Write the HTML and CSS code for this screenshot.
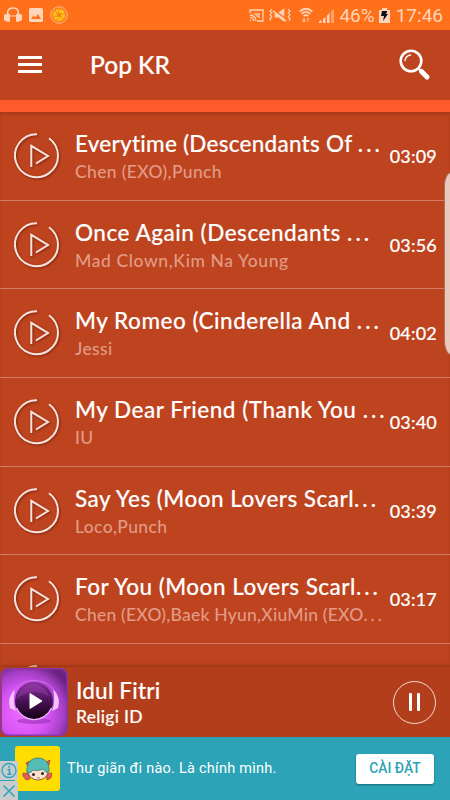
FILE: index.html
```html
<!DOCTYPE html>
<html lang="vi">
<head>
    <meta charset="UTF-8">
    <meta name="viewport" content="width=device-width, initial-scale=1.0">
    <title>Pop KR</title>
    <link rel="stylesheet" href="styles.css">
</head>
<body>

    <!-- shared icons -->
    <svg class="sprite" width="0" height="0">
        <symbol id="play" viewBox="0 0 46 46">
            <path d="M23 1.200A21.500 21.500 0 1 0 35 5.200" />
            <path d="M17.300 34V12.800L34 23 22 30.500" />
        </symbol>
    </svg>

    <div class="status-bar">
        <div class="status-left">
            <svg width="18" height="16" viewBox="0 0 18 16" fill="#ffd5ba">
                <path d="M3.500 8V6.500C3.500 3 5.500 1 9 1s5.500 2 5.500 5.500V8" fill="none" stroke="#ffd5ba" stroke-width="1.500" />
                <path d="M5 9h8" stroke="#ffd5ba" stroke-width="1" />
                <rect x="0" y="7" width="3" height="7" rx="1.500" />
                <rect x="2.500" y="6.500" width="3.500" height="8.500" rx="1.500" />
                <rect x="12" y="6.500" width="3.500" height="8.500" rx="1.500" />
                <rect x="15" y="7" width="3" height="7" rx="1.500" />
            </svg>
            <svg width="14" height="14" viewBox="0 0 14 14">
                <rect width="14" height="14" rx="1.500" fill="#ffd5ba" />
                <path d="M2 11l2.500-3.500 2 2 2.500-3.500 3 5z" fill="#ff711a" />
            </svg>
            <svg width="18" height="18" viewBox="0 0 18 18">
                <circle cx="9" cy="9" r="8.300" fill="#ff8322" stroke="#ffb47e" stroke-width="1" />
                <circle cx="9" cy="9" r="6" fill="#ffc51b" />
                <circle cx="9" cy="9" r="2.100" fill="#ff7a18" />
                <path d="M8 7L10 3M10.500 7.500l4.500.5M11 10l2 4M10 11l-4 3.500M7.200 10.500L3 10M7.200 8L5 4" stroke="#e8860d" stroke-width=".9" />
            </svg>
        </div>
        <div class="status-right">
            <svg width="15" height="13" viewBox="0 0 15 13" fill="none" stroke="#ffd5ba" stroke-width="1.300">
                <path d="M1 4V1h13v11H8" />
                <path d="M4 4h7v5H9z" fill="#ffb184" stroke="none" />
                <path d="M1 6a6 6 0 0 1 6 6M1 8.300A3.700 3.700 0 0 1 4.700 12M1 11.500h1.200" />
            </svg>
            <svg class="icon-mute" width="22" height="16" viewBox="0 0 23 16" fill="none" stroke="#ffd5ba" stroke-width="1.200">
                <path d="M3 2L1 4l2 2-2 2 2 2-2 2 1 2M20 2l2 2-2 2 2 2-2 2 2 2-1 2" />
                <path d="M6 5.500h4L16 1v14l-6-4.500H6z" fill="#ffd5ba" stroke="none" />
                <path d="M4 2l15 11" stroke="#ff711a" stroke-width="1.500" />
                <path d="M4 3.500l14 11" stroke-width="1.500" />
            </svg>
            <svg class="icon-wifi" width="14" height="16" viewBox="0 0 14 16" fill="none" stroke="#ffd5ba" stroke-width="1.700">
                <path d="M.7 4.500Q7-1 13.300 4.500M2.700 6.900Q7 3 11.300 6.900M4.700 9.200Q7 7 9.300 9.200" />
                <path d="M5 11v4M3.500 13L5 15l1.500-2" stroke="#ffd5ba" stroke-width="1" />
                <path d="M9 15v-4M7.500 13L9 11l1.500 2" stroke="#ffae78" stroke-width="1" />
            </svg>
            <svg class="icon-signal" width="15" height="15" viewBox="0 0 15 15" fill="#ffd5ba">
                <path d="M0 15v-1.500L2.500 12v3zM4 15v-4l2.500-2v6zM8 15V7.500L10.500 5v10z" />
                <path d="M12 15V3.500L15 1v14z" fill="#ffa46c" />
            </svg>
            <span class="battery-text">46%</span>
            <svg class="icon-battery" width="11" height="15" viewBox="0 0 11 15">
                <path d="M0 2h3V0h5v2h3v13H0z" fill="#ffd5ba" />
                <path d="M3 3h5v1L7 6h2l-5 7 1-5H2z" fill="#111" />
            </svg>
            <span class="clock">17:46</span>
        </div>
    </div>

    <div class="header">
        <div class="menu">
            <span></span>
            <span></span>
            <span></span>
        </div>
        <h1>Pop KR</h1>
        <svg class="search" width="32" height="32" viewBox="0 0 32 32" fill="none" stroke="#fff" stroke-linecap="round">
            <circle cx="12" cy="12" r="10.300" stroke-width="2.600" />
            <path d="M6 11.500C6.500 8.500 8.500 6.500 11.500 6" stroke-width="1.400" />
            <path d="M19.500 19.500l2 2" stroke-width="2" stroke-linecap="butt" />
            <path d="M22.500 22.500l5.500 5.500" stroke-width="5" />
        </svg>
    </div>
    <div class="strip"></div>

    <div class="songs">
        <div class="song">
            <svg class="play"><use href="#play" /></svg>
            <div class="info">
                <div class="title t1">Everytime (Descendants Of <span class="dots">...</span></div>
                <div class="artist">Chen (EXO),Punch</div>
            </div>
            <div class="time">03:09</div>
        </div>
        <div class="song">
            <svg class="play"><use href="#play" /></svg>
            <div class="info">
                <div class="title">Once Again (Descendants <span class="dots">...</span></div>
                <div class="artist a2">Mad Clown,Kim Na Young</div>
            </div>
            <div class="time">03:56</div>
        </div>
        <div class="song">
            <svg class="play"><use href="#play" /></svg>
            <div class="info">
                <div class="title">My Romeo (Cinderella And <span class="dots">...</span></div>
                <div class="artist">Jessi</div>
            </div>
            <div class="time">04:02</div>
        </div>
        <div class="song">
            <svg class="play"><use href="#play" /></svg>
            <div class="info">
                <div class="title">My Dear Friend (Thank You <span class="dots">...</span></div>
                <div class="artist">IU</div>
            </div>
            <div class="time">03:40</div>
        </div>
        <div class="song">
            <svg class="play"><use href="#play" /></svg>
            <div class="info">
                <div class="title t5">Say Yes (Moon Lovers Scarl<span class="dots">...</span></div>
                <div class="artist">Loco,Punch</div>
            </div>
            <div class="time">03:39</div>
        </div>
        <div class="song">
            <svg class="play"><use href="#play" /></svg>
            <div class="info">
                <div class="title t5">For You (Moon Lovers Scarl<span class="dots">...</span></div>
                <div class="artist a6">Chen (EXO),Baek Hyun,XiuMin (EXO<span class="dots">...</span></div>
            </div>
            <div class="time">03:17</div>
        </div>
        <div class="song">
            <svg class="play"><use href="#play" /></svg>
        </div>
        <div class="edge-panel"></div>
    </div>

    <div class="player">
        <svg class="cover" width="68" height="68" viewBox="0 0 68 68">
            <defs>
                <radialGradient id="bg" cx=".35" cy=".65" r=".75">
                    <stop offset="0" stop-color="#f36cff" />
                    <stop offset=".5" stop-color="#d653f5" />
                    <stop offset=".8" stop-color="#a53fc4" />
                    <stop offset="1" stop-color="#6c2484" />
                </radialGradient>
                <linearGradient id="ball" x1="0" y1="0" x2="0" y2="1">
                    <stop offset="0" stop-color="#8a30a0" />
                    <stop offset=".5" stop-color="#4a1259" />
                    <stop offset="1" stop-color="#10000f" />
                </linearGradient>
            </defs>
            <rect x="1.200" y=".7" width="66" height="66.600" rx="7" fill="url(#bg)" stroke="#8a35a5" stroke-width="1.400" />
            <ellipse cx="34" cy="53" rx="17" ry="3" fill="#8a25a5" opacity=".5" />
            <path d="M14 22Q7 30 10 40l6 3q-4-9-1-22zM54 22q7 8 4 18l-6 3q4-9 1-22z" fill="#f4c4ff" />
            <path d="M14 23C20 9 48 9 54 23" fill="none" stroke="#c976dd" stroke-width="1" />
            <circle cx="34" cy="33" r="19" fill="url(#ball)" />
            <path d="M16.500 40a19 19 0 0 0 35 0" fill="none" stroke="#efb4ff" stroke-width="1.400" />
            <path d="M16 32Q25 22 42 25 50 27 51 33 45 16 33 16 19 17 16 32z" fill="#a34bb8" opacity=".35" />
            <path d="M30 25.500v15L42 33z" fill="#fff" stroke="#fff" stroke-linejoin="round" />
        </svg>
        <div class="now">
            <div class="now-title">Idul Fitri</div>
            <div class="now-artist">Religi ID</div>
        </div>
        <div class="pause">
            <span></span>
            <span></span>
        </div>
    </div>

    <div class="ad">
        <div class="ad-icon">
            <svg width="32" height="26" viewBox="0 0 32 26">
                <path d="M4 7l4-2 2 4-4 2zM24 6l4-2-1 5-3 1zM1 17l6 1 1 5-4 1-3-4zM24 18l6-1-1 5-4 2z" fill="#e9585f" stroke="#8b3b32" stroke-width=".6" />
                <ellipse cx="16" cy="15.500" rx="10" ry="8.500" fill="#fde3cf" stroke="#55332b" stroke-width=".7" />
                <path d="M5 17C4 7 9 2 16 2c7 0 12 5 11 14-3 1-5-1-6-3-4 2-7 2-10 1-1 2-3 3-6 3z" fill="#55bcb6" stroke="#35736f" stroke-width=".7" />
                <circle cx="11.500" cy="18.500" r="1.500" fill="#332522" />
                <circle cx="20.500" cy="17.500" r="1.500" fill="#332522" />
                <path d="M15 21.500q1.500.8 3 0" fill="none" stroke="#b35050" stroke-width=".8" />
            </svg>
        </div>
        <div class="ad-text">Thư giãn đi nào. Là chính mình.</div>
        <div class="ad-button">CÀI ĐẶT</div>
        <div class="ad-controls">
            <svg width="18" height="19" viewBox="0 0 18 19" fill="none" stroke="#2ba4b7" stroke-width="1.300">
                <circle cx="9" cy="9.500" r="7" />
                <path d="M7.500 8.500H9.500V13M7.500 13.200h4M9 4.800v2" stroke-width="1.500" />
            </svg>
            <svg width="18" height="19" viewBox="0 0 18 19" fill="none" stroke="#2ba4b7" stroke-width="1.500">
                <path d="M3.500 4.500l11 11M14.500 4.500l-11 11" />
            </svg>
        </div>
    </div>

</body>
</html>
```
FILE: styles.css
```css
* {
    box-sizing: border-box;
}
body {
    font-family: Lato, sans-serif;
    font-weight: 500;
    margin: 0;
    height: 800px;
    display: flex;
    flex-direction: column;
    overflow: hidden;
    background: #be431f;
    color: #fff;
}
svg {
    display: block;
    flex: none;
}
.sprite {
    position: absolute;
}
.status-bar {
    height: 30px;
    flex: none;
    display: flex;
    justify-content: space-between;
    align-items: center;
    padding: 0 7px 0 4px;
    background: #ff701a;
    color: #ffd5ba;
    font-family: Roboto, sans-serif;
    font-weight: 400;
    font-size: 19px;
}
.status-left, .status-right {
    display: flex;
    align-items: center;
}
.status-left {
    gap: 7px;
}
.icon-mute {
    margin-left: 5px;
}
.icon-wifi {
    margin-left: 8px;
}
.icon-signal {
    margin: 1px 0 0 6px;
}
.battery-text {
    margin-left: 5px;
}
.icon-battery {
    margin: 0 6px 0 4px;
}
/* header */
.header {
    height: 70px;
    flex: none;
    display: flex;
    align-items: center;
    padding: 0 19px 0 18px;
}
.menu {
    width: 24px;
    display: flex;
    flex-direction: column;
    gap: 4.5px;
    margin-top: -1px;
}
.menu span {
    height: 2.5px;
    background: #fff;
}
h1 {
    flex: 1;
    margin: 0 0 0 48px;
    font-size: 24.5px;
    font-weight: 500;
    line-height: 30px;
    -webkit-text-stroke: 0.2px #fff;
}
.search {
    margin-top: -1px;
}
.strip {
    height: 12px;
    flex: none;
    background: #ff5a2b;
}
/* song list */
.songs {
    position: relative;
    height: 555px;
    flex: none;
    overflow: hidden;
    box-shadow: inset 0 2px 2px rgba(100, 30, 10, 0.25);
}
.song {
    height: 88.7px;
    display: flex;
    align-items: flex-start;
    padding: 0 13px 0 14px;
    border-bottom: 1px solid #d17c63;
}
.play {
    width: 46px;
    height: 46px;
    margin-top: 21px;
    fill: none;
    stroke: #f8e5df;
    stroke-width: 2;
    overflow: visible;
    filter: drop-shadow(1px 1px 1px rgba(80, 20, 0, 0.6));
}
.info {
    flex: 1;
    min-width: 0;
    padding: 18px 0 0 15px;
    white-space: nowrap;
}
.title {
    font-size: 22.5px;
    line-height: 28px;
    letter-spacing: 0.52px;
    -webkit-text-stroke: 0.15px #fff;
}
.t1 {
    letter-spacing: 0.25px;
}
.t5 {
    letter-spacing: 0.48px;
}
.artist {
    font-size: 17.5px;
    line-height: 28px;
    letter-spacing: 0.35px;
    color: #e19b86;
}
.a2 {
    letter-spacing: 0.6px;
}
.a6 {
    letter-spacing: 0.22px;
}
.dots {
    letter-spacing: 3px;
}
.time {
    width: 48px;
    margin-top: 33px;
    font-size: 18px;
    line-height: 22px;
    display: flex;
    justify-content: flex-end;
    letter-spacing: 0.2px;
    white-space: nowrap;
    -webkit-text-stroke: 0.15px #fff;
}
/* handle of the phone's edge panel */
.edge-panel {
    position: absolute;
    top: 60px;
    right: -8px;
    width: 14px;
    height: 183px;
    border: 1px solid #a17362;
    border-radius: 8px / 16px;
    background: #ecc7bb;
}
/* player */
.player {
    height: 70px;
    flex: none;
    display: flex;
    align-items: center;
    padding-right: 14px;
    background: #b33e1c;
    box-shadow: 0 -1px 3px rgba(90, 30, 10, 0.5);
    z-index: 1;
}
.now {
    flex: 1;
    padding: 1px 0 0 8px;
}
.now-title {
    font-size: 22.5px;
    line-height: 27px;
    letter-spacing: 0.2px;
    -webkit-text-stroke: 0.15px #fff;
}
.now-artist {
    font-size: 17.5px;
    line-height: 25px;
    letter-spacing: 0.3px;
    -webkit-text-stroke: 0.15px #fff;
}
.pause {
    width: 43px;
    height: 43px;
    display: flex;
    justify-content: center;
    align-items: center;
    gap: 5px;
    border: 1.5px solid #f5dcd4;
    border-radius: 50%;
}
.pause span {
    width: 3px;
    height: 18px;
    border-radius: 1px;
    background: #fff;
}
/* ad banner */
.ad {
    position: relative;
    height: 63px;
    flex: none;
    display: flex;
    align-items: center;
    padding: 0 16px 0 15px;
    background: #2ca3b6;
    font-family: Roboto, sans-serif;
    z-index: 2;
}
.ad-icon {
    width: 45px;
    height: 45px;
    display: flex;
    align-items: center;
    justify-content: center;
    border-radius: 3px;
    background: #ffdd00;
}
.ad-text {
    flex: 1;
    padding-left: 7px;
    font-size: 14.5px;
    font-weight: 400;
    letter-spacing: 0.25px;
    white-space: nowrap;
}
.ad-button {
    width: 78px;
    height: 30px;
    border-radius: 3px;
    background: #fff;
    box-shadow: 0 1px 2px rgba(0, 50, 60, 0.5);
    color: #2ca3b6;
    font-size: 13.8px;
    line-height: 29px;
    text-align: center;
}
.ad-controls {
    position: absolute;
    left: 0;
    bottom: 0;
}
.ad-controls svg {
    margin-top: 1px;
    background: #c8ccce;
}
```
